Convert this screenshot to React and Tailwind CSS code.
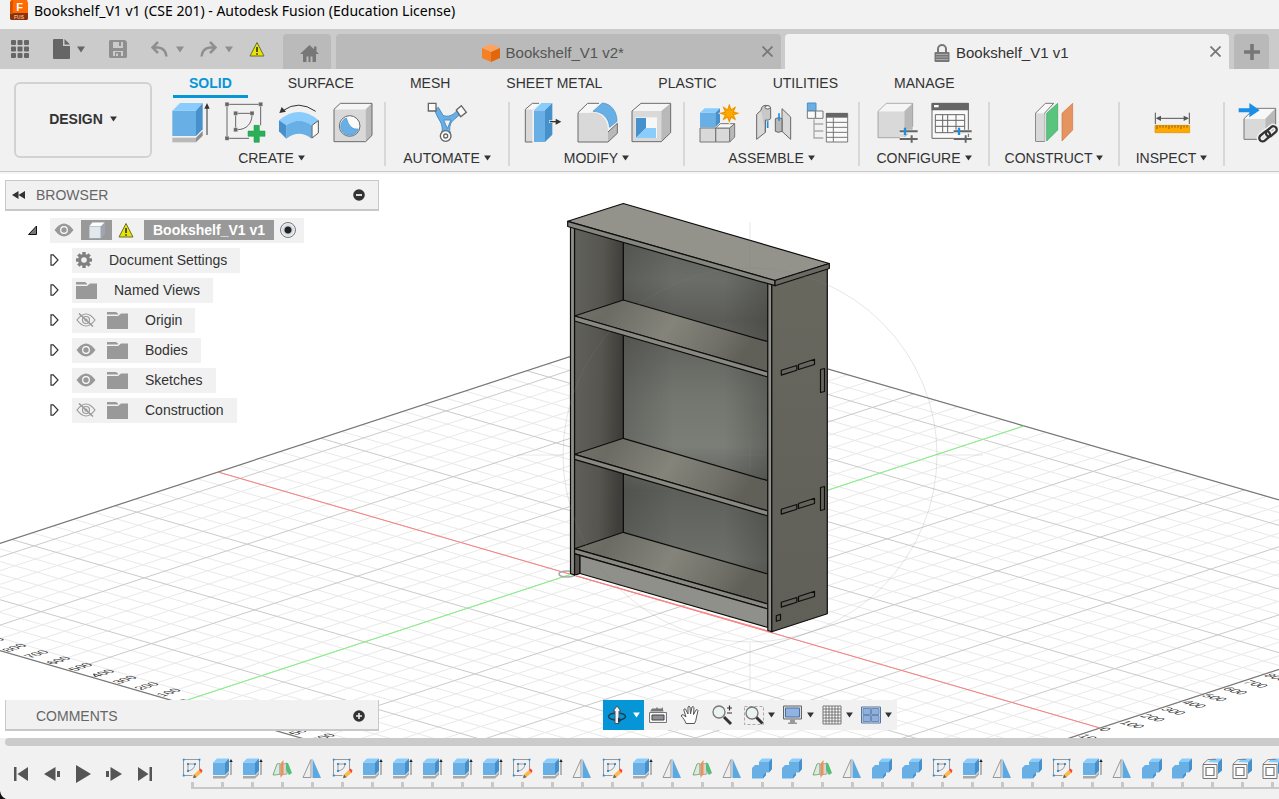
import React, { useState } from "react";

const ribbonTabs = [
  "SOLID",
  "SURFACE",
  "MESH",
  "SHEET METAL",
  "PLASTIC",
  "UTILITIES",
  "MANAGE",
];

const Caret = ({ className = "w-2 h-[7px]" }) => (
  <svg viewBox="0 0 8 7" className={`shrink-0 ${className}`} fill="currentColor">
    <path d="M0 0.5h8L4 6.5z" />
  </svg>
);

const Warning = ({ className = "" }) => (
  <svg viewBox="0 0 16 16" className={`w-4 h-4 ${className}`}>
    <path d="M8 1.5 15 15H1z" fill="#e6e600" stroke="#6b6b3a" strokeWidth="1" />
    <path d="M8 6v5M8 12.2v1.6" stroke="#222" strokeWidth="1.5" />
  </svg>
);

/* ---------- ribbon icons ---------- */

const RibbonSvg = ({ children }) => (
  <svg viewBox="0 0 120 126" className="w-10 h-[42px] overflow-visible">
    {children}
  </svg>
);

const Extrude = () => (
  <RibbonSvg>
    <path d="M4 26h71v76H4z" fill="#68afe6" />
    <path d="M4 26 27 3h68L75 26z" fill="#8accfb" />
    <path d="M75 26 95 3v79L75 102z" fill="#4690cc" />
    <path d="M4 107h71v14H4z" fill="#b9b9b9" />
    <path d="M75 107 95 87v14L75 121z" fill="#8d8d8d" />
    <path d="M108 99V12" stroke="#333" strokeWidth="3" />
    <path d="M108 3l-8 17h16z" fill="#333" />
  </RibbonSvg>
);

const CreateSketch = () => (
  <RibbonSvg>
    <path
      d="M12 7h90M6 13v90M107 13v57M12 109h60M32 40v37M38 34h37M81 40C80 64 66 82 38 83"
      fill="none"
      stroke="#666"
      strokeWidth="3"
    />
    <path
      d="M0 1h12v12H0zM101 1h12v12h-12zM0 103h12v12H0zM26 28h12v12H26zM75 28h12v12H75zM26 77h12v12H26z"
      fill="#666"
      stroke="#f1f1f1"
      strokeWidth="1"
    />
    <path d="M87 70h16v17h17v16h-17v18H87v-18H69V87h18z" fill="#2bb05a" stroke="#159443" strokeWidth="1.5" />
  </RibbonSvg>
);

const Bend = () => (
  <RibbonSvg>
    <path d="M0 55Q60 5 119 55L98 70Q60 43 22 70z" fill="#8accfb" />
    <path d="M22 70Q60 43 98 70v40Q60 80 22 110z" fill="#68afe6" />
    <path d="M0 55l22 15v40L0 88z" fill="#4690cc" />
    <path d="M99 70l19-14v37L99 108z" fill="#fafafa" stroke="#555" strokeWidth="3" />
    <path d="M110 28Q58-8 12 26" fill="none" stroke="#333" strokeWidth="3" />
    <path d="M1 33 8 15l13 14z" fill="#333" />
  </RibbonSvg>
);

const Hole = () => (
  <RibbonSvg>
    <path d="M3 22h95v97H3z" fill="#d9d9d9" />
    <path d="M3 22 22 4h95L98 22z" fill="#f5f5f5" />
    <path d="M98 22 117 4v96L98 119z" fill="#b9b9b9" />
    <path d="M3 22 22 4h95v96L98 119H3z" fill="none" stroke="#6b6b6b" strokeWidth="3" />
    <circle cx="50" cy="72" r="31" fill="#fafafa" stroke="#6b6b6b" strokeWidth="3" />
    <path d="M40 48A27 27 0 1 0 76 81Q50 86 40 48z" fill="#68afe6" stroke="#3f8dcb" strokeWidth="2" />
  </RibbonSvg>
);

const Automate = () => (
  <RibbonSvg>
    <path
      d="M24 24C30 52 46 56 46 84C40 96 44 110 56 116C70 112 74 98 68 86C68 58 76 58 98 38L90 26C76 42 62 46 48 40L34 16zM50 54h22l-11 26z"
      fill="#68afe6"
      stroke="#4a8fc6"
      strokeWidth="3"
      fillRule="evenodd"
    />
    <path d="M4 4h23v23H4z" fill="#fafafa" stroke="#666" strokeWidth="4" />
    <path d="M88 24 103 11 118 31 101 44z" fill="#fafafa" stroke="#666" strokeWidth="4" />
    <circle cx="56" cy="102" r="16" fill="#fafafa" stroke="#666" strokeWidth="4" />
    <circle cx="56" cy="102" r="6" fill="none" stroke="#666" strokeWidth="4" />
  </RibbonSvg>
);

const PressPull = () => (
  <RibbonSvg>
    <path d="M7 22h21v98H7z" fill="#d9d9d9" />
    <path d="M7 22 28 4h22L28 22z" fill="#f7f7f7" />
    <path d="M28 120H7V22L28 4h20" fill="none" stroke="#6b6b6b" strokeWidth="3" />
    <path d="M33 25h33v95H33z" fill="#68afe6" />
    <path d="M33 25 55 3h33L66 25z" fill="#8accfb" />
    <path d="M66 25 88 3v95l-22 22z" fill="#4690cc" />
    <path d="M78 59h24" stroke="#f1f1f1" strokeWidth="8" />
    <path d="M80 59h22" stroke="#333" strokeWidth="4" />
    <path d="M115 59 98 50v18z" fill="#333" />
  </RibbonSvg>
);

const Fillet = () => (
  <RibbonSvg>
    <path d="M3 32v88h90V90C93 52 74 32 48 32z" fill="#d9d9d9" />
    <path d="M3 32 32 4h34L40 32z" fill="#f7f7f7" />
    <path d="M93 90l28-26v30l-28 26z" fill="#b9b9b9" />
    <path d="M66 4H32L3 32v88h90l28-26V64" fill="none" stroke="#6b6b6b" strokeWidth="3" />
    <path d="M93 90l28-26" fill="none" stroke="#6b6b6b" strokeWidth="3" />
    <path d="M48 28 76 3C104 5 120 30 120 58L98 76C96 50 78 28 48 28z" fill="#68afe6" stroke="#3f8dcb" strokeWidth="2" />
  </RibbonSvg>
);

const Shell = () => (
  <RibbonSvg>
    <path d="M3 27h88v92H3z" fill="#d9d9d9" />
    <path d="M3 27 30 4h89L91 27z" fill="#f5f5f5" />
    <path d="M91 27 119 4v88l-28 27z" fill="#b9b9b9" />
    <path d="M3 27 30 4h89v88l-28 27H3z" fill="none" stroke="#6b6b6b" strokeWidth="3" />
    <path d="M14 46h64v62H14z" fill="#f7f7f7" />
    <path d="M15 48h30v30L15 108z" fill="#4690cc" />
    <path d="M15 108 45 78h30v30z" fill="#8accfb" />
  </RibbonSvg>
);

const NewComponent = () => (
  <RibbonSvg>
    <path d="M6 32h46v44H6z" fill="#68afe6" />
    <path d="M6 32 20 19h46L52 32z" fill="#8accfb" />
    <path d="M52 32 66 19v42L52 76z" fill="#4690cc" />
    <path d="M6 78h47v42H6zM53 78h42v42H53z" fill="#d9d9d9" stroke="#777" strokeWidth="3" />
    <path d="M53 78 67 65h43L95 78z" fill="#f7f7f7" stroke="#777" strokeWidth="3" />
    <path d="M95 78l15-13v40l-15 15z" fill="#b9b9b9" stroke="#777" strokeWidth="3" />
    <path
      d="M94 3l6 17 15-9-6 17 17 6-17 6 6 17-15-8-6 17-6-17-15 8 6-17-17-6 17-6-6-17 15 9z"
      fill="#ffa800"
      stroke="#f1f1f1"
      strokeWidth="2"
    />
    <path d="M94 8l5 17 13-9-7 15 16 3-16 4 7 14-13-8-5 15-5-15-13 8 7-14-16-4 16-3-7-15 13 9z" fill="#ffa800" stroke="#dc8a00" strokeWidth="2" />
  </RibbonSvg>
);

const Joint = () => (
  <RibbonSvg>
    <g stroke="#666" strokeWidth="3" strokeLinejoin="round">
      <path d="M14 37 40 13v78L14 112z" fill="#d9d9d9" />
      <path d="M27 25Q28 10 42 10Q56 11 56 22v28q-7 7-16 4v37" fill="#c8c8c8" />
      <ellipse cx="47" cy="16" rx="8" ry="5" fill="#f5f5f5" />
      <path d="M90 20l26 25v67L90 88z" fill="#d9d9d9" />
      <path d="M70 50q10-6 20 0v38q-12 6-20 0z" fill="#b9b9b9" />
    </g>
    <path d="M47 58v20M81 34v22" stroke="#1a8fe6" strokeWidth="5" />
  </RibbonSvg>
);

const ComponentTree = () => (
  <RibbonSvg>
    <path d="M4 3h26v24H4z" fill="#68afe6" stroke="#4a8fc6" strokeWidth="3" />
    <path d="M4 27h24v22H4zM29 27h22v22H29z" fill="#fafafa" stroke="#777" strokeWidth="3" />
    <path d="M24 52v58M24 66h28M24 87h28M24 108h28" fill="none" stroke="#aaa" strokeWidth="4" />
    <path d="M61 34h64v86H61z" fill="#fafafa" stroke="#777" strokeWidth="3" />
    <path d="M60 33h65v14H60z" fill="#666" />
    <path d="M61 61h63M61 76h63M61 91h63M61 106h63M82 47v73" stroke="#777" strokeWidth="3" />
  </RibbonSvg>
);

const Sliders = () => (
  <g>
    <path d="M68 89h54M68 111h54" stroke="#f1f1f1" strokeWidth="12" />
    <path d="M68 88h54M68 111h54M104 100v22" stroke="#666" strokeWidth="6" />
    <path d="M84 77v22" stroke="#1a8fe6" strokeWidth="7" />
  </g>
);

const ConfigureModel = () => (
  <RibbonSvg>
    <path d="M3 28h79v79H3z" fill="#d9d9d9" />
    <path d="M3 28 28 4h79L82 28z" fill="#f5f5f5" />
    <path d="M82 28l25-24v79l-25 24z" fill="#b9b9b9" />
    <path d="M70 107H3V28L28 4h79v70" fill="none" stroke="#8d8d8d" strokeWidth="2" />
    <Sliders />
  </RibbonSvg>
);

const ConfigureTable = () => (
  <RibbonSvg>
    <path d="M3 4h109v105H3z" fill="#fafafa" stroke="#666" strokeWidth="3" />
    <path d="M2 3h111v22H2z" fill="#666" />
    <path d="M9 9h14v7H9z" fill="#fafafa" />
    <path d="M13 38h88v54H13zM13 55h88M13 73h88M35 38v54M50 38v54M75 38v54" fill="none" stroke="#666" strokeWidth="3" />
    <Sliders />
  </RibbonSvg>
);

const ConstructPlane = () => (
  <RibbonSvg>
    <path d="M5 33 34 4h25L32 33v85H5z" fill="#f7f7f7" stroke="#777" strokeWidth="3" />
    <path d="M6 34h26v83H6z" fill="#d9d9d9" />
    <path d="M38 34 71 4v80l-33 33z" fill="#5ac47e" stroke="#35a55c" strokeWidth="2" />
    <path d="M84 34 116 4v80l-32 33z" fill="#e5935f" stroke="#ca7844" strokeWidth="2" />
  </RibbonSvg>
);

const Measure = () => (
  <RibbonSvg>
    <path d="M10 32v34M112 32v34M18 49h86" stroke="#555" strokeWidth="3" />
    <path d="M11 49l16-8v16zM111 49l-16-8v16z" fill="#555" />
    <path d="M9 70h104v22H9z" fill="#ffa800" stroke="#d98f00" strokeWidth="2" />
    <path d="M15 70v11M24 70v7M33 70v7M42 70v7M51 70v11M60 70v7M69 70v7M78 70v7M87 70v11M96 70v7M105 70v7" stroke="#8a5e00" strokeWidth="3" />
  </RibbonSvg>
);

const InsertDerive = () => (
  <RibbonSvg>
    <path d="M18 50h64v62H18z" fill="#d9d9d9" />
    <path d="M18 50 50 19h63L82 50z" fill="#f7f7f7" />
    <path d="M82 50l31-31v60l-31 33z" fill="#b9b9b9" />
    <path d="M60 112H18V50L50 19h63v52" fill="none" stroke="#777" strokeWidth="3" />
    <path d="M2 19h32V3l31 22-31 21V31H2z" fill="#1a8fe6" />
    <g fill="none" stroke="#f1f1f1" strokeWidth="16">
      <rect x="62" y="93" width="36" height="20" rx="10" transform="rotate(-40 80 103)" />
      <rect x="82" y="78" width="36" height="20" rx="10" transform="rotate(-40 100 88)" />
    </g>
    <g fill="none" stroke="#333" strokeWidth="7">
      <rect x="62" y="93" width="36" height="20" rx="10" transform="rotate(-40 80 103)" />
      <rect x="82" y="78" width="36" height="20" rx="10" transform="rotate(-40 100 88)" />
    </g>
  </RibbonSvg>
);

const ribbonGroups = [
  { name: "CREATE", width: "w-[231px] pl-1", icons: [Extrude, CreateSketch, Bend, Hole] },
  { name: "AUTOMATE", width: "w-[124px]", icons: [Automate] },
  { name: "MODIFY", width: "w-[175px]", icons: [PressPull, Fillet, Shell] },
  { name: "ASSEMBLE", width: "w-[175px]", icons: [NewComponent, Joint, ComponentTree] },
  { name: "CONFIGURE", width: "w-[130px]", icons: [ConfigureModel, ConfigureTable] },
  { name: "CONSTRUCT", width: "w-[130px]", icons: [ConstructPlane] },
  { name: "INSPECT", width: "w-[105px]", icons: [Measure] },
];

/* ---------- header ---------- */

const TitleBar = () => (
  <div className="h-[29px] shrink-0 bg-[#f2f2f2] flex items-start pl-[10px] gap-[6px]">
    <svg viewBox="0 0 18 20" className="w-[18px] h-5">
      <path d="M1 0h16l1 3v12H0V2z" fill="#ff6b00" />
      <path d="M0 13h18v6l-1 1H1l-1-1z" fill="#8a3208" />
      <path d="M0 2l3-2v14H0z" fill="#d95400" />
      <text x="9.500" y="11" textAnchor="middle" fontFamily="Liberation Sans, sans-serif" fontSize="11" fontWeight="bold" fill="#fff">
        F
      </text>
      <text x="9" y="19" textAnchor="middle" fontFamily="Liberation Sans, sans-serif" fontSize="5" fontWeight="bold" fill="#e8b79c">
        FUS
      </text>
    </svg>
    <h1 className="text-[14px] leading-[22px] text-black whitespace-nowrap font-['Noto_Sans',sans-serif]">
      Bookshelf_V1 v1 (CSE 201) - Autodesk Fusion (Education License)
    </h1>
  </div>
);

const QuickAccess = () => (
  <div className="w-[283px] shrink-0 flex items-center pl-[11px] text-[#666]">
    <button type="button" aria-label="Show data panel" className="mr-6">
      <svg viewBox="0 0 18 18" className="w-[18px] h-[18px]" fill="currentColor">
        {[0, 6.5, 13].map((y) =>
          [0, 6.5, 13].map((x) => <rect key={`${x}-${y}`} x={x} y={y} width="5" height="5" rx="1" />)
        )}
      </svg>
    </button>
    <button type="button" aria-label="File" className="flex items-center gap-[7px] mr-6">
      <svg viewBox="0 0 17 20" className="w-[17px] h-5" fill="currentColor">
        <path d="M1 0h9v7h7v12a1 1 0 0 1-1 1H1a1 1 0 0 1-1-1V1a1 1 0 0 1 1-1z" />
        <path d="M11.500 0 17 5.500h-5.500z" />
      </svg>
      <Caret />
    </button>
    <button type="button" aria-label="Save" className="mr-6 text-[#8f8f8f]">
      <svg viewBox="0 0 18 18" className="w-[18px] h-[18px]">
        <path d="M1 0h15l2 2v15l-1 1H1l-1-1V1z" fill="currentColor" />
        <path d="M4 2h10v6H4zM4 11h10v5H4z" fill="#cbcbcb" />
        <path d="M10 2h2v4h-2zM6 12h6v4H6z" fill="currentColor" />
        <path d="M7 13.500h2V16H7z" fill="#cbcbcb" />
      </svg>
    </button>
    <button type="button" aria-label="Undo" className="flex items-center gap-2 mr-4 text-[#8f8f8f]">
      <svg viewBox="0 0 17 16" className="w-[17px] h-4" fill="none" stroke="currentColor" strokeWidth="2.500">
        <path d="M7 1 1.500 6.500 7 12M2 6.500h5q8 1 8.500 9" />
      </svg>
      <Caret />
    </button>
    <button type="button" aria-label="Redo" className="flex items-center gap-2 mr-4 text-[#8f8f8f]">
      <svg viewBox="0 0 17 16" className="w-[17px] h-4" fill="none" stroke="currentColor" strokeWidth="2.500">
        <path d="M10 1l5.500 5.500L10 12M15 6.500h-5q-8 1-8.500 9" />
      </svg>
      <Caret />
    </button>
    <Warning />
  </div>
);

const CloseIcon = () => (
  <svg viewBox="0 0 11 11" className="w-[11px] h-[11px]" stroke="#777" strokeWidth="1.800">
    <path d="M0.500 0.500l10 10M10.500 0.500l-10 10" />
  </svg>
);

const DocumentTabs = () => (
  <div className="h-10 shrink-0 bg-[#cbcbcb] flex">
    <QuickAccess />
    <button type="button" aria-label="Home" className="mt-[5px] mr-[5px] w-12 shrink-0 rounded-t bg-[#bababa] flex items-center justify-center pt-1 pl-1">
      <svg viewBox="0 0 19 17" className="w-[19px] h-[17px]" fill="#777">
        <path d="M9.500 0 14 4.200V1.500h2.500v5L19 9H0z" />
        <path d="M3 9h13v8h-3.500v-5.500h-2V17H8.500v-5.500h-2V17H3z" />
      </svg>
    </button>
    <div className="mt-[5px] mr-1 flex-1 rounded-t bg-[#bababa] flex items-center pl-2 pr-2">
      <button type="button" className="flex-1 flex items-center justify-center gap-[6px] pt-[2px] text-[15px] leading-5 text-[#555]">
        <svg viewBox="0 0 18 20" className="w-[18px] h-5">
          <path d="M0 5 9 1l9 4-9 4z" fill="#ffa35c" />
          <path d="M0 5l9 4v10l-9-4z" fill="#f58025" />
          <path d="M18 5 9 9v10l9-4z" fill="#e0670c" />
        </svg>
        Bookshelf_V1 v2*
      </button>
      <button type="button" aria-label="Close Bookshelf_V1 v2">
        <CloseIcon />
      </button>
    </div>
    <div className="mt-[5px] mr-[5px] flex-1 rounded-t bg-[#f1f1f1] flex items-center pl-2 pr-2">
      <button type="button" className="flex-1 flex items-center justify-center gap-[6px] pt-[2px] text-[15px] leading-5 text-[#333]">
        <svg viewBox="0 0 16 18" className="w-4 h-[18px]">
          <path d="M4 9V5a4 4 0 0 1 8 0v4" fill="none" stroke="#777" strokeWidth="2" />
          <rect x="0.500" y="8" width="15" height="10" rx="1" fill="#777" />
          <path d="M2 10.500h12M2 13h12M2 15.500h12" stroke="#aaa" />
        </svg>
        Bookshelf_V1 v1
      </button>
      <button type="button" aria-label="Close Bookshelf_V1 v1">
        <CloseIcon />
      </button>
    </div>
    <button type="button" aria-label="New design" className="mt-[5px] mr-[10px] w-[35px] shrink-0 rounded-t bg-[#b9b9b9] flex items-center justify-center">
      <svg viewBox="0 0 16 16" className="w-4 h-4" fill="#777">
        <path d="M6.200 0h3.600v6.200H16v3.600H9.800V16H6.200V9.800H0V6.200h6.200z" />
      </svg>
    </button>
  </div>
);

const Ribbon = () => {
  const [activeTab, setActiveTab] = useState("SOLID");

  return (
    <div className="shrink-0 bg-[#f1f1f1] border-b border-[#c8c8c8] flex overflow-hidden text-[#333]">
      <div className="pl-[14px] pt-[13px] pr-[3px] pb-[13px] shrink-0">
        <button
          type="button"
          className="w-[138px] h-[76px] border-2 border-[#d2d2d2] rounded-md flex items-center justify-center gap-[7px] pb-[2px] text-sm font-bold"
        >
          DESIGN <Caret className="w-[7px] h-[6px]" />
        </button>
      </div>
      <div className="min-w-0">
        <nav className="flex gap-6 pl-[18px] h-[33px]">
          {ribbonTabs.map((tab) => (
            <button
              key={tab}
              type="button"
              onClick={() => setActiveTab(tab)}
              className={`px-4 pt-[2px] h-[29px] text-sm whitespace-nowrap border-b-[3px] ${
                activeTab === tab
                  ? "font-bold text-[#0696d7] border-[#0696d7]"
                  : "border-transparent"
              }`}
            >
              {tab}
            </button>
          ))}
        </nav>
        <div className="flex">
          {ribbonGroups.map((group) => (
            <div
              key={group.name}
              className={`shrink-0 h-16 border-r-2 border-[#d8d8d8] flex flex-col items-center justify-between ${group.width}`}
            >
              <div className="flex gap-[14px]">
                {group.icons.map((Icon, i) => (
                  <button key={i} type="button" aria-label={`${group.name} tool ${i + 1}`}>
                    <Icon />
                  </button>
                ))}
              </div>
              <button type="button" className="flex items-center gap-1 text-sm leading-4">
                {group.name} <Caret className="w-[7px] h-[6px]" />
              </button>
            </div>
          ))}
          <button type="button" aria-label="Insert derive" className="shrink-0 h-[42px] ml-[13px]">
            <InsertDerive />
          </button>
        </div>
      </div>
    </div>
  );
};

/* ---------- browser tree ---------- */

const Eye = ({ hidden }) => (
  <svg viewBox="0 0 20 14" className="w-5 h-[14px]">
    {hidden ? (
      <g fill="none" stroke="#999" strokeWidth="1.200">
        <path d="M1 7q9-12 18 0q-9 12-18 0z" />
        <circle cx="10" cy="7" r="3.500" />
        <circle cx="10" cy="7" r="1" />
        <path d="M3 0.500 17 13.500" strokeWidth="1.500" />
      </g>
    ) : (
      <g>
        <path d="M0.500 7q9.500-13 19 0q-9.500 13-19 0z" fill="#999" />
        <circle cx="10" cy="7" r="3.300" fill="none" stroke="#fff" strokeWidth="1.200" />
      </g>
    )}
  </svg>
);

const Gear = () => (
  <svg viewBox="0 0 16 16" className="w-4 h-4">
    {[0, 45, 90, 135].map((angle) => (
      <rect key={angle} x="6.300" y="0" width="3.400" height="16" fill="#808080" transform={`rotate(${angle} 8 8)`} />
    ))}
    <circle cx="8" cy="8" r="4.400" fill="#f1f1f1" stroke="#808080" strokeWidth="3.200" />
  </svg>
);

const Folder = () => (
  <svg viewBox="0 0 21 17" className="w-[21px] h-[17px]" fill="#999">
    <path d="M0 0h9l2 1.500v1H0z" />
    <path d="M0 4h11l3-2.500h7V17H0z" />
  </svg>
);

const treeItems = [
  { name: "Document Settings", icon: "gear" },
  { name: "Named Views", icon: "folder" },
  { name: "Origin", icon: "folder", eye: "off" },
  { name: "Bodies", icon: "folder", eye: "on" },
  { name: "Sketches", icon: "folder", eye: "on" },
  { name: "Construction", icon: "folder", eye: "off" },
];

const TreeRow = ({ item }) => (
  <li className="h-[30px] flex items-center pl-[50px]">
    <button type="button" aria-label={`Expand ${item.name}`} className="w-[22px]">
      <svg viewBox="0 0 9 12" className="w-[9px] h-3" fill="#fff" stroke="#333" strokeWidth="1.200">
        <path d="M1 0.800h2.200L8 6l-4.800 5.200H1z" />
      </svg>
    </button>
    <div className="h-[25px] bg-[#f1f1f1] flex items-center pl-1 pr-[13px]">
      {item.eye && (
        <button type="button" aria-label={`Toggle ${item.name}`} className="mr-[11px]">
          <Eye hidden={item.eye === "off"} />
        </button>
      )}
      {item.icon === "gear" ? <Gear /> : <Folder />}
      <span className="ml-[17px] text-[14px] leading-5 text-[#333] whitespace-nowrap">{item.name}</span>
    </div>
  </li>
);

const BrowserPanel = () => (
  <section className="pt-[6px]">
    <div className="ml-[5px] w-[374px] h-[31px] bg-[#f1f1f1] border border-b-2 border-[#c8c8c8] flex items-center pl-[6px] pr-[13px]">
      <button type="button" aria-label="Collapse browser">
        <svg viewBox="0 0 13 8" className="w-[13px] h-2" fill="#333">
          <path d="M6.500 0v8L0 4zM13 0v8L6.500 4z" />
        </svg>
      </button>
      <h2 className="ml-[11px] flex-1 text-[14px] text-[#666]">BROWSER</h2>
      <button type="button" aria-label="Hide browser">
        <svg viewBox="0 0 12 12" className="w-3 h-3">
          <circle cx="6" cy="6" r="5.800" fill="#333" />
          <path d="M3 6h6" stroke="#f1f1f1" strokeWidth="1.800" />
        </svg>
      </button>
    </div>
    <ul className="pt-1">
      <li className="h-[30px] flex items-center pl-7">
        <button type="button" aria-label="Collapse design" className="w-[22px]">
          <svg viewBox="0 0 9 10" className="w-[9px] h-[10px]">
            <path d="M8.500 1v8.500H0.500z" fill="#777" stroke="#111" />
          </svg>
        </button>
        <div className="h-[25px] bg-[#f1f1f1] flex items-center pl-1 pr-2">
          <Eye />
          <span className="ml-[7px] w-[31px] h-5 bg-[#999] flex items-center justify-center">
            <svg viewBox="0 0 16 17" className="w-4 h-[17px]">
              <path d="M0 4l3-4h13v12l-4 5H0z" fill="#9ea5ae" />
              <path d="M0.500 4.500h11V16H0.500z" fill="#e3e7ee" />
              <path d="M0.500 4 3.500 0.500h12L12 4z" fill="#fff" />
            </svg>
          </span>
          <Warning className="ml-[6px]" />
          <span className="ml-[10px] h-5 px-[9px] bg-[#999] text-white text-[14px] leading-5 font-bold whitespace-nowrap">
            Bookshelf_V1 v1
          </span>
          <input
            type="radio"
            name="active-component"
            aria-label="Activate Bookshelf_V1 v1"
            defaultChecked
            className="ml-[6px] w-4 h-4 appearance-none rounded-full border border-[#777] bg-[radial-gradient(circle,#222_3px,#ccd3df_4px,#fff_8px)]"
          />
        </div>
      </li>
      {treeItems.map((item) => (
        <TreeRow key={item.name} item={item} />
      ))}
    </ul>
  </section>
);

/* ---------- 3d canvas ---------- */

// ground plane: x runs along the red axis, y along the green one, in steps of 100 mm
const project = (x, y) => [570.8 + x * 22.05 + y * 20.6, 574.4 + x * 6.4 - y * 6.75];
const X_MIN = -16;
const X_MAX = 24;
const Y_MIN = -19;
const Y_MAX = 22;

const segment = (a, b) => `M${a[0].toFixed(1)} ${a[1].toFixed(1)}L${b[0].toFixed(1)} ${b[1].toFixed(1)}`;

const minorLines = [];
const majorLines = [];
for (let x = X_MIN; x <= X_MAX; x++) {
  const line = segment(project(x, Y_MIN), project(x, Y_MAX));
  (x % 5 === 0 ? majorLines : minorLines).push(line);
}
for (let y = Y_MIN; y <= Y_MAX; y++) {
  const line = segment(project(X_MIN, y), project(X_MAX, y));
  (y % 5 === 0 ? majorLines : minorLines).push(line);
}

const range = (from, to) => Array.from({ length: to - from + 1 }, (_, i) => from + i);

const Ground = () => (
  <g fill="none">
    <path d={minorLines.join("")} stroke="#e9e9e9" />
    <path d={majorLines.join("")} stroke="#cacaca" />
    <path
      d={
        segment(project(X_MIN, Y_MIN), project(X_MIN, Y_MAX)) +
        segment(project(X_MAX, Y_MIN), project(X_MAX, Y_MAX)) +
        segment(project(X_MIN, Y_MIN), project(X_MAX, Y_MIN)) +
        segment(project(X_MIN, Y_MAX), project(X_MAX, Y_MAX))
      }
      stroke="#777"
      strokeWidth="1.200"
    />
    <path d={segment(project(X_MIN, 0), project(X_MAX, 0))} stroke="#ff8080" />
    <path d={segment(project(0, Y_MIN), project(0, Y_MAX))} stroke="#80f880" />
    <g fill="#333" fontFamily="Liberation Sans, sans-serif" fontSize="12">
      {range(-9, 6).map((x) => {
        const [px, py] = project(x, Y_MIN);
        return (
          <text key={x} transform={`matrix(0.95 -0.31 0.96 0.28 ${px} ${py})`} x="2" y="4">
            {Math.abs(x) * 100}
          </text>
        );
      })}
      {range(-1, 8).map((y) => {
        const [px, py] = project(X_MAX, y);
        return (
          <text key={y} transform={`matrix(0.96 0.28 -0.95 0.31 ${px} ${py})`} x="2" y="4">
            {Math.abs(y) * 100}
          </text>
        );
      })}
    </g>
  </g>
);

const shelves = [
  { left: 316, back: 300, backRight: 341.7, frontRight: 372 },
  { left: 454.3, back: 438.3, backRight: 480.7, frontRight: 511 },
  { left: 548.7, back: 532.3, backRight: 574, frontRight: 604 },
];

const Bookshelf = () => (
  <g stroke="#0d0d0d" strokeWidth="1.200" strokeLinejoin="round">
    <defs>
      <linearGradient id="backWall" x1="0" y1="0" x2="0" y2="1">
        <stop offset="0" stopColor="#585a55" />
        <stop offset="0.160" stopColor="#6b6d68" />
        <stop offset="0.260" stopColor="#5b5c57" />
        <stop offset="0.450" stopColor="#73756f" />
        <stop offset="0.570" stopColor="#7b7d77" />
        <stop offset="0.680" stopColor="#5d5f5a" />
        <stop offset="0.850" stopColor="#6d6f6a" />
        <stop offset="1" stopColor="#4d4e49" />
      </linearGradient>
      <linearGradient id="backShade" x1="0" y1="0" x2="1" y2="0">
        <stop offset="0" stopColor="#2c2c28" stopOpacity="0.250" />
        <stop offset="0.350" stopColor="#2c2c28" stopOpacity="0" />
        <stop offset="0.700" stopColor="#2c2c28" stopOpacity="0" />
        <stop offset="1" stopColor="#2c2c28" stopOpacity="0.300" />
      </linearGradient>
      <linearGradient id="leftWall" x1="0" y1="0" x2="1" y2="0.150">
        <stop offset="0" stopColor="#62625c" />
        <stop offset="0.600" stopColor="#56554f" />
        <stop offset="1" stopColor="#3f3e3a" />
      </linearGradient>
      <linearGradient id="shelfTop" x1="0" y1="0" x2="1" y2="0.250">
        <stop offset="0" stopColor="#74736a" />
        <stop offset="0.200" stopColor="#6c6b63" />
        <stop offset="0.550" stopColor="#85847b" />
        <stop offset="0.850" stopColor="#706f67" />
        <stop offset="1" stopColor="#605f58" />
      </linearGradient>
      <linearGradient id="sideWall" x1="0" y1="0" x2="0" y2="1">
        <stop offset="0" stopColor="#69685f" />
        <stop offset="1" stopColor="#605f58" />
      </linearGradient>
    </defs>

    <path d="M623.300 215 768 256V620L623.300 575z" fill="url(#backWall)" />
    <path d="M623.300 215 768 256V620L623.300 575z" fill="url(#backShade)" stroke="none" />
    <path d="M574.500 225 623.300 210V560L574.500 575z" fill="url(#leftWall)" />

    {shelves.map((s) => (
      <g key={s.left}>
        <path
          d={`M574.500 ${s.left}L623.300 ${s.back}L768 ${s.backRight}V${s.frontRight}z`}
          fill="url(#shelfTop)"
        />
        <path
          d={`M574.500 ${s.left}L768 ${s.frontRight}v5L574.500 ${s.left + 5}z`}
          fill="#898981"
        />
      </g>
    ))}

    <path d="M574.500 553.700 580 555.500V573.500L574.500 575z" fill="#55544e" />
    <path d="M580 555.500 768 609V627.500L580 573.500z" fill="#8f9089" />
    <path d="M570.500 226h4v349l-4-1.500z" fill="#8f9089" />
    <path d="M767.800 283h4v348.700l-4-1.200z" fill="#8f9089" />
    <path d="M771.800 284 827.300 266V613.700L771.800 631.700z" fill="url(#sideWall)" />

    <path d="M567.700 221.300 623.300 203.500 829.300 263.500 775 280.500z" fill="#93938b" />
    <path d="M567.700 221.300 775 280.500v5.200L567.700 226.500z" fill="#85867e" />
    <path d="M775 280.500 829.300 263.500v5L775 285.700z" fill="#6b6a62" />

    <g fill="none">
      {[0, 139, 232].map((dy) => (
        <path
          key={dy}
          transform={`translate(0 ${dy})`}
          d="M781.300 370.300l15.500-4.800v4.800l-15.500 4.800zM798.500 364.500l16-5.200v5.200l-16 5z"
        />
      ))}
      <path d="M820.500 369.500l4-1v23l-4 1zM820.500 487.500l4-1v23l-4 1z" />
      <path d="M776.300 615.700l4.200-1.400v5.700l-4.200 1.300z" />
    </g>
  </g>
);

const Scene = () => (
  <svg
    viewBox="0 174 1279 564"
    preserveAspectRatio="xMidYMid slice"
    className="absolute inset-0 w-full h-full"
    role="img"
    aria-label="Bookshelf model"
  >
    <Ground />
    <ellipse cx="567" cy="574" rx="8" ry="3" fill="none" stroke="#aaa" strokeWidth="1.500" />
    <Bookshelf />
    <path d="M575 575.500 767 630.500" stroke="#ff8080" />
    <g fill="none" stroke="#808080" strokeOpacity="0.200">
      <circle cx="750" cy="455" r="187" />
      <path d="M750 222v46M750 440v30M735 455h30M750 643v46M517 455h46M937 455h46" />
    </g>
  </svg>
);

/* ---------- bottom bars ---------- */

const CommentsPanel = () => (
  <section className="ml-[5px] w-[374px] h-[31px] bg-[#f1f1f1] border border-t-0 border-b-2 border-[#c8c8c8] flex items-center pt-[3px] pl-[30px] pr-[13px]">
    <h2 className="flex-1 text-[14px] text-[#666]">COMMENTS</h2>
    <button type="button" aria-label="Show comments">
      <svg viewBox="0 0 12 12" className="w-3 h-3">
        <circle cx="6" cy="6" r="5.800" fill="#333" />
        <path d="M3 6h6M6 3v6" stroke="#f1f1f1" strokeWidth="1.600" />
      </svg>
    </button>
  </section>
);

const NavButton = ({ label, caret, children }) => (
  <button type="button" aria-label={label} className="flex items-center gap-1 text-[#333]">
    <svg viewBox="0 0 20 20" className="w-5 h-5 overflow-visible">
      {children}
    </svg>
    {caret && <Caret className="w-[7px] h-[6px]" />}
  </button>
);

const NavigationBar = () => (
  <div className="h-[30px] bg-[#f1f1f1] flex items-center pr-[5px]">
    <button type="button" aria-label="Orbit" className="w-[41px] h-[30px] bg-[#0696d7] flex items-center justify-center gap-[6px] text-white">
      <svg viewBox="0 0 20 20" className="w-5 h-5">
        <ellipse cx="10" cy="11.500" rx="8.500" ry="3.500" fill="none" stroke="#1b3e57" strokeWidth="1.500" />
        <path d="M10 1l3.800 5h-1.800V18.500H8V6H6.200z" fill="#f4f4f4" stroke="#44525c" />
        <path d="M11 12.500l4 2.500-4 3z" fill="#1b3e57" />
      </svg>
      <Caret className="w-[7px] h-[6px]" />
    </button>
    <div className="flex items-center ml-1 gap-[12px]">
      <NavButton label="Look at">
        <path d="M1.500 7.500h17v10h-17z" fill="#f5f5f5" stroke="#777" />
        <path d="M4 10h12v5H4z" fill="#8c8f94" stroke="#444" />
        <path d="M2 6.500l2-3h4l1-1.500 1 1.500h3.500l1-1.500 1 4.500z" fill="#777" />
      </NavButton>
      <NavButton label="Pan">
        <path
          d="M6 18.500C5 15 3 13 1.200 11Q1.500 9 3.500 10L6 12 3.800 5Q4 3.300 5.500 4L8 9V2Q8.800.5 10 2L10.500 9 12 2Q13 .8 14 2.500L13.500 9.500 16 5Q17.500 4 18 5.500L16.500 12Q16 16 14.500 18.500z"
          fill="#fff"
          stroke="#555"
        />
      </NavButton>
      <NavButton label="Zoom">
        <circle cx="7" cy="7" r="6" fill="#eaf2f2" stroke="#777" strokeWidth="1.300" />
        <path d="M12 12l7 7" stroke="#333" strokeWidth="3" />
        <path d="M15 3h5M17.500.5v5M15 8h5" stroke="#333" strokeWidth="1.200" />
      </NavButton>
      <NavButton label="Zoom window" caret>
        <path d="M0.500 1.500h19v18h-19z" fill="none" stroke="#aaa" strokeDasharray="3 2" />
        <circle cx="8" cy="8" r="6" fill="#eaf2f2" stroke="#777" strokeWidth="1.300" />
        <path d="M12.500 12.500l6 6" stroke="#333" strokeWidth="3" />
      </NavButton>
    </div>
    <div className="flex items-center ml-2 gap-2">
      <NavButton label="Display settings" caret>
        <path d="M0.500 1h18v13h-18z" fill="#ddd" stroke="#666" />
        <path d="M2.500 3h14v9h-14z" fill="#8fb4e3" stroke="#4c6f9e" />
        <path d="M7 14.500h5v3H7zM5 17.500h9V19H5z" fill="#999" />
      </NavButton>
      <NavButton label="Grid settings" caret>
        <path d="M1 1h18v18H1z" fill="#fafafa" />
        <path
          d="M1 1h18v18H1zM1 4h18M1 7h18M1 10h18M1 13h18M1 16h18M4 1v18M7 1v18M10 1v18M13 1v18M16 1v18"
          fill="none"
          stroke="#777"
        />
      </NavButton>
      <NavButton label="Viewports" caret>
        <path d="M0.500 2h19v16h-19z" fill="#dbe6f4" stroke="#55749f" />
        <path d="M2 3.500h7.500v6H2zM10.500 3.500H18v6h-7.500zM2 10.500h7.500v6H2zM10.500 10.500H18v6h-7.500z" fill="#8fb0dc" stroke="#6d8cb8" />
      </NavButton>
    </div>
  </div>
);

/* ---------- timeline ---------- */

const featureIcons = {
  sketch: (
    <g>
      <path d="M1.500 1.500h16M1.500 1.500v16M17.500 1.500v11M1.500 17.500h9M6 6v7M6 6h7M13 6q-.5 6-7 7" fill="none" stroke="#999" />
      <path
        d="M.8.800h1.800v1.800H.800zM16.600.800h1.800v1.800h-1.800zM.8 16.600h1.800v1.800H.800zM5.100 5.100h1.800v1.800H5.100zM12.100 5.100h1.800v1.800h-1.800zM5.100 12.100h1.800v1.800H5.100z"
        fill="#1a8fe6"
      />
      <path d="M12 20l-.5-3 6-5.500 2.500 2.800-5.500 5z" fill="#fbb84b" />
      <path d="M17 12l1.500-1.500 2 2L19.500 15z" fill="#ff4040" />
      <path d="M12 16.500l2.500 2.800-3.500 1z" fill="#666" />
    </g>
  ),
  extrude: (
    <g>
      <path d="M1 4.500h12V17H1z" fill="#68afe6" />
      <path d="M1 4.500 5 .500h12l-4 4z" fill="#8accfb" />
      <path d="M13 4.500l4-4V13l-4 4z" fill="#4690cc" />
      <path d="M1 18h12v2.500H1zM13 18l4-4v2.500l-4 4z" fill="#aaa" />
      <path d="M19 17V3" stroke="#777" />
      <path d="M19 1l-1.700 3h3.400z" fill="#222" />
    </g>
  ),
  plane: (
    <g>
      <path d="M1 17 5 6q2-1 3 0v10q-3 1-7 1z" fill="#dcebdc" stroke="#7bab84" />
      <path d="M8 7l7-2v11l-7 1z" fill="#ddd3cb" stroke="#aaa" />
      <path d="M14 5h2l4 10-3 2-3-5z" fill="#55bf77" />
      <path d="M8.500 5.500 11.500 2v14l-3 4z" fill="#e5935f" />
    </g>
  ),
  mirror: (
    <g>
      <path d="M9 1.500V19.500H1z" fill="#eee" stroke="#999" />
      <path d="M10.500.500 19 20h-8.500z" fill="#5ea8e0" />
    </g>
  ),
  combine: (
    <g>
      <path d="M0 10l3-3h4V4l3-3h10v10l-3 3.500h-3V17l-3 3.500H0z" fill="#68afe6" />
      <path d="M7 4l3-3.500h10L17 4z" fill="#8accfb" />
      <path d="M17 4l3-3.500V11l-3 3.500zM11 17.500l3-3V17l-3 3.500z" fill="#4690cc" />
    </g>
  ),
  shell: (
    <g>
      <path d="M6 4l4-3.500h10L16 4.500z" fill="#8accfb" />
      <path d="M16 4.500l4-4v12L16 16z" fill="#4690cc" />
      <path d="M1 6.500h14v14H1z" fill="#fafafa" stroke="#777" />
      <path d="M4 9.500h8v8H4z" fill="#fff" stroke="#777" strokeWidth="1.200" />
      <path d="M1 6 6 1.500h8" fill="none" stroke="#888" />
    </g>
  ),
};

const timeline = [
  "sketch", "extrude", "extrude", "plane", "mirror", "sketch",
  "extrude", "extrude", "extrude", "extrude", "extrude", "sketch",
  "extrude", "mirror", "sketch", "extrude", "mirror", "plane",
  "mirror", "combine", "combine", "plane", "mirror", "combine",
  "combine", "sketch", "extrude", "mirror", "combine", "sketch",
  "extrude", "mirror", "combine", "combine", "shell", "shell", "shell",
];

const playback = [
  { label: "Go to beginning", d: "M1 1h2.500v14H1zM15 1v14L4.500 8z" },
  { label: "Step back", d: "M11.500 1v14L0 8zM13 5h3v6h-3z" },
  { label: "Play", d: "M1-1l15 9L1 17z" },
  { label: "Step forward", d: "M4.500 1v14L16 8zM0 5h3v6H0z" },
  { label: "Go to end", d: "M1 1v14l10.500-7zM12.500 1H15v14h-2.500z" },
];

const Timeline = () => (
  <footer className="shrink-0 h-[61px] bg-[#f1f1f1] relative overflow-hidden">
    <div className="ml-[5px] h-2 rounded-l bg-[#cbcbcb]" />
    <div className="flex">
      <div className="w-[177px] shrink-0 flex items-center gap-[15px] pl-[13px] pt-3 text-[#555]">
        {playback.map((item) => (
          <button key={item.label} type="button" aria-label={item.label}>
            <svg viewBox="0 0 16 16" className="w-4 h-4 overflow-visible" fill="currentColor">
              <path d={item.d} />
            </svg>
          </button>
        ))}
      </div>
      <ol className="flex pt-3">
        {timeline.map((feature, i) => (
          <li key={i} className="w-[30px] shrink-0 flex flex-col items-center">
            <button type="button" aria-label={`${feature} ${i + 1}`} className="h-[21px]">
              <svg viewBox="0 0 21 21" className="w-[21px] h-[21px]">
                {featureIcons[feature]}
              </svg>
            </button>
            <div className="mt-[3px] w-[3px] h-[5px] bg-[#c8c8c8]" />
            <div className={`h-[2px] bg-[#c8c8c8] ${i === 0 ? "w-4 self-end" : "w-full"}`} />
          </li>
        ))}
      </ol>
    </div>
    <svg viewBox="0 0 6 8" className="absolute bottom-0 left-0 w-[6px] h-2">
      <path d="M0 0q1 6 6 8H0z" fill="#111" />
    </svg>
  </footer>
);

const App = () => {
  return (
    <div className="h-screen flex flex-col overflow-hidden bg-white font-['Liberation_Sans',Arial,sans-serif]">
      <TitleBar />
      <DocumentTabs />
      <Ribbon />
      <div className="h-[2px] shrink-0 bg-[#f5f5f5]" />
      <main className="relative flex-1 min-h-0 overflow-hidden">
        <Scene />
        <div className="relative h-full flex flex-col justify-between">
          <BrowserPanel />
          <div className="flex items-start pb-[7px]">
            <CommentsPanel />
            <div className="flex-1 flex justify-start pl-[224px]">
              <NavigationBar />
            </div>
          </div>
        </div>
      </main>
      <Timeline />
    </div>
  );
};

export default App;
